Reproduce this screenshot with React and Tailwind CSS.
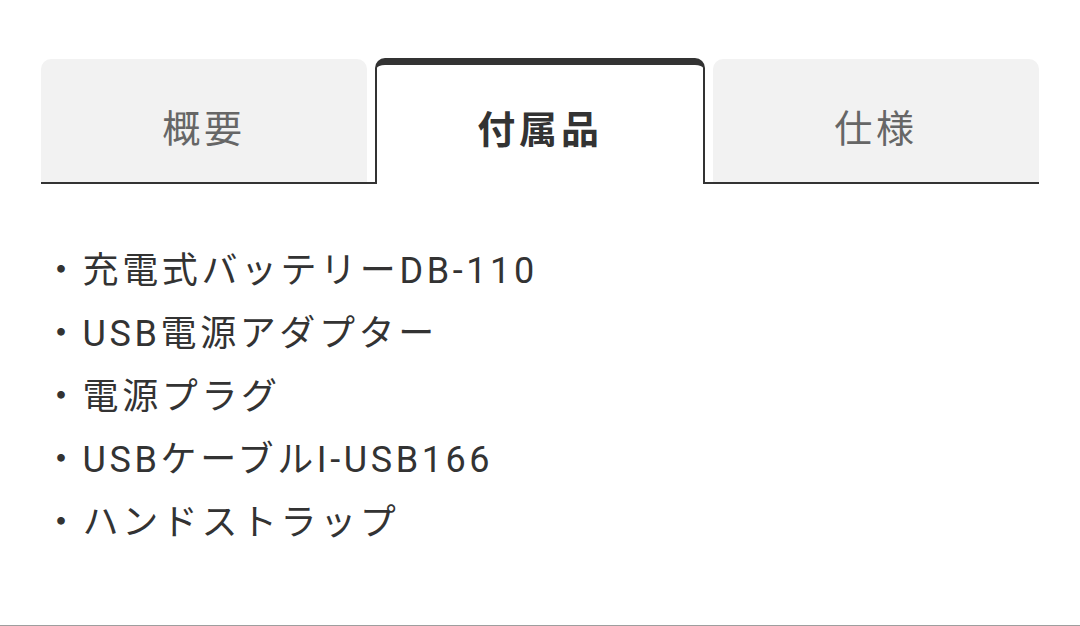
import React from "react";

const ITEMS = [
  "充電式バッテリーDB-110",
  "USB電源アダプター",
  "電源プラグ",
  "USBケーブルI-USB166",
  "ハンドストラップ",
];

const App = () => {
  return (
    <div className="h-[626px] bg-white border-b border-[#9e9e9e] px-[41px] pt-[58px] font-[Roboto,'Noto_Sans_CJK_JP',sans-serif]">
      <div className="flex items-end gap-[8px] h-[126px] border-b-2 border-[#333]">
        <div className="flex-1 h-[123px] rounded-t-[10px] bg-[#f2f2f2] flex items-center justify-center pt-[18px] text-[38px] tracking-[0.1em] text-[#666]">
          概要
        </div>
        <div className="flex-1 h-[126px] -mb-[2px] rounded-t-[10px] bg-white border-x-2 border-t-[7px] border-[#333] flex items-center justify-center pt-[12px] text-[38px] tracking-[0.1em] font-bold text-[#333]">
          付属品
        </div>
        <div className="flex-1 h-[123px] rounded-t-[10px] bg-[#f2f2f2] flex items-center justify-center pt-[18px] text-[38px] tracking-[0.1em] text-[#666]">
          仕様
        </div>
      </div>

      <ul className="mt-[56px] pl-[2px] text-[36px] leading-[63px] tracking-[0.1em] text-[#333]">
        {ITEMS.map((item, index) => (
          <li key={index}>・{item}</li>
        ))}
      </ul>
    </div>
  );
};

export default App;
